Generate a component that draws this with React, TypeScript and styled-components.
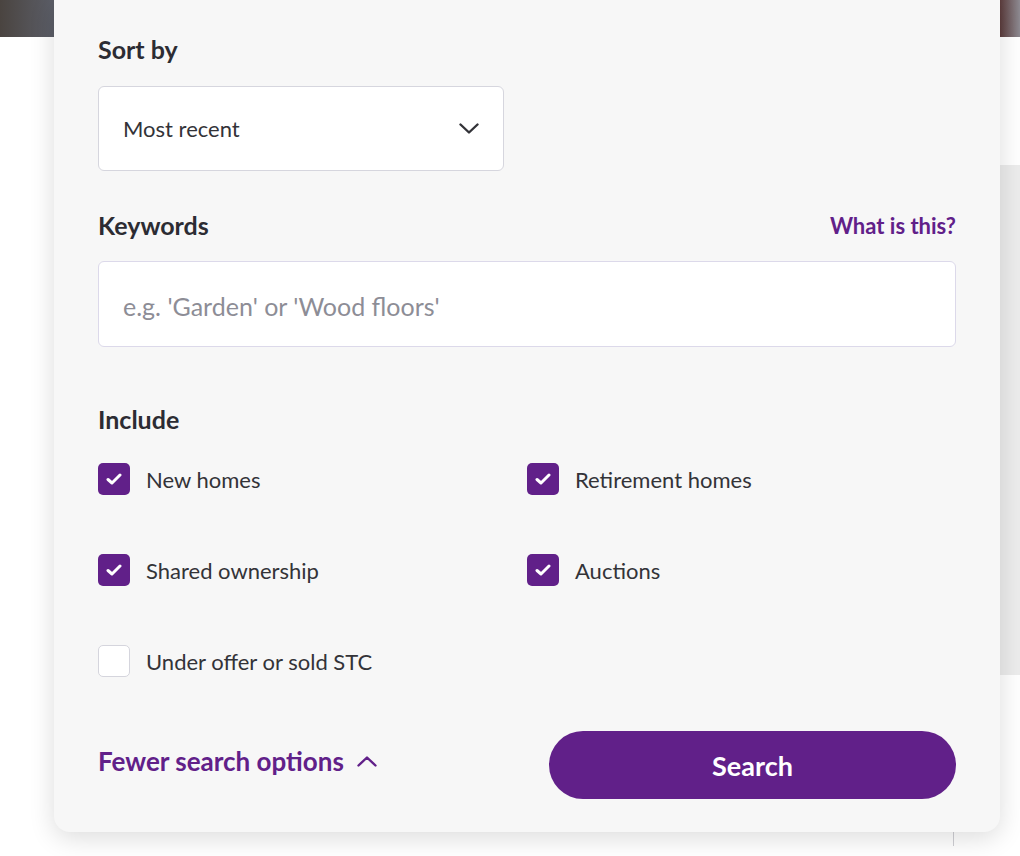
import React from 'react';
import styled, { createGlobalStyle } from 'styled-components';

const GlobalStyle = createGlobalStyle`
  html, body {
    margin: 0;
    padding: 0;
    background: #ffffff;
    font-family: Lato, 'Open Sans', 'Liberation Sans', sans-serif;
  }
  * { box-sizing: border-box; }
`;

const purple = '#612089';
const ink = '#2c2c33';

const Page = styled.div`
  position: relative;
  width: 1020px;
  height: 856px;
  overflow: hidden;
  background: #ffffff;
`;

const HeroStrip = styled.div`
  position: absolute;
  top: 0;
  left: 0;
  right: 0;
  height: 37px;
  background: linear-gradient(90deg, #4a4440 0%, #5b5d66 5%, #6a6c74 50%, #8b888f 97%, #5a3a3a 98%, #8e8b92 100%);
`;

const SideBar = styled.div`
  position: absolute;
  right: 0;
  top: 165px;
  width: 20px;
  height: 510px;
  background: #ececec;
`;

const Divider = styled.div`
  position: absolute;
  left: 953px;
  top: 826px;
  width: 1px;
  height: 20px;
  background: #cfcfd4;
`;

const Panel = styled.div`
  position: relative;
  margin-left: 54px;
  width: 946px;
  padding: 34px 44px 33px;
  background: #f7f7f7;
  border-radius: 0 0 16px 16px;
  box-shadow: 0 6px 26px rgba(0, 0, 0, 0.14);
`;

const Label = styled.div<{ $top?: number }>`
  margin-top: ${(p) => p.$top ?? 0}px;
  font-size: 25px;
  line-height: 30px;
  font-weight: 700;
  color: ${ink};
`;

const LabelRow = styled.div<{ $top: number }>`
  display: flex;
  align-items: center;
  justify-content: space-between;
  margin-top: ${(p) => p.$top}px;
`;

const HelpLink = styled.a`
  font-size: 22px;
  font-weight: 700;
  color: ${purple};
  text-decoration: none;
  cursor: pointer;
`;

const Select = styled.div`
  display: flex;
  align-items: center;
  justify-content: space-between;
  width: 406px;
  height: 85px;
  margin-top: 22px;
  padding: 0 24px;
  background: #ffffff;
  border: 1px solid #d6d6de;
  border-radius: 6px;
  font-size: 22px;
  color: #333338;
`;

const Input = styled.input`
  display: block;
  width: 100%;
  height: 86px;
  margin-top: 21px;
  padding: 4px 24px 0;
  background: #ffffff;
  border: 1px solid #dcd9ea;
  border-radius: 6px;
  font-family: inherit;
  font-size: 25px;
  color: #333338;
  outline: none;

  &::placeholder {
    color: #8d8d96;
  }
`;

const Options = styled.div`
  display: grid;
  grid-template-columns: 1fr 1fr;
  row-gap: 59px;
  margin-top: 29px;
`;

const Option = styled.label`
  display: flex;
  align-items: center;
  gap: 16px;
  font-size: 22px;
  color: #333338;
  cursor: pointer;
`;

const Box = styled.span<{ $checked: boolean }>`
  display: flex;
  align-items: center;
  justify-content: center;
  width: 32px;
  height: 32px;
  border-radius: 5px;
  background: ${(p) => (p.$checked ? purple : '#ffffff')};
  border: ${(p) => (p.$checked ? 'none' : '1.5px solid #d5d5dd')};
`;

const Footer = styled.div`
  display: flex;
  align-items: center;
  justify-content: space-between;
  margin-top: 54px;
`;

const ToggleLink = styled.a`
  display: flex;
  align-items: center;
  gap: 13px;
  margin-top: -8px;
  font-size: 26px;
  font-weight: 700;
  color: ${purple};
  cursor: pointer;
`;

const SearchButton = styled.button`
  width: 407px;
  height: 68px;
  border: none;
  border-radius: 34px;
  background: ${purple};
  color: #ffffff;
  font-family: inherit;
  font-size: 27px;
  font-weight: 700;
  cursor: pointer;
`;

const Chevron = ({ up, color }: { up?: boolean; color: string }) => (
  <svg width="20" height="11" viewBox="0 0 20 11" fill="none">
    <path
      d={up ? 'M1.5 9.5 L10 1.5 L18.5 9.5' : 'M1.5 1.5 L10 9.5 L18.5 1.5'}
      stroke={color}
      strokeWidth="2.4"
      strokeLinecap="round"
      strokeLinejoin="round"
    />
  </svg>
);

const Check = () => (
  <svg width="16" height="12" viewBox="0 0 16 12" fill="none">
    <path d="M2 6.5 L6 10 L14 2" stroke="#ffffff" strokeWidth="3" strokeLinecap="round" strokeLinejoin="round" />
  </svg>
);

const options = [
  { label: 'New homes', checked: true },
  { label: 'Retirement homes', checked: true },
  { label: 'Shared ownership', checked: true },
  { label: 'Auctions', checked: true },
  { label: 'Under offer or sold STC', checked: false },
];

export default function App() {
  return (
    <Page>
      <GlobalStyle />
      <HeroStrip />
      <SideBar />
      <Divider />
      <Panel>
        <Label>Sort by</Label>
        <Select>
          <span>Most recent</span>
          <Chevron color="#333338" />
        </Select>

        <LabelRow $top={39}>
          <Label>Keywords</Label>
          <HelpLink>What is this?</HelpLink>
        </LabelRow>
        <Input placeholder="e.g. 'Garden' or 'Wood floors'" />

        <Label $top={57}>Include</Label>
        <Options>
          {options.map((o) => (
            <Option key={o.label}>
              <Box $checked={o.checked}>{o.checked && <Check />}</Box>
              {o.label}
            </Option>
          ))}
        </Options>

        <Footer>
          <ToggleLink>
            Fewer search options
            <Chevron up color={purple} />
          </ToggleLink>
          <SearchButton>Search</SearchButton>
        </Footer>
      </Panel>
    </Page>
  );
}
